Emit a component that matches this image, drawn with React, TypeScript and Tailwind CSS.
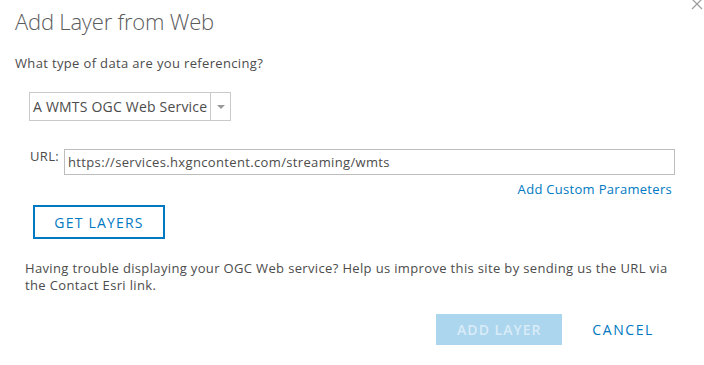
import React from 'react';

export default function App() {
  return (
    <div className="relative w-[704px] h-[365px] overflow-hidden bg-white text-[#4c4c4c] font-['Open_Sans',sans-serif]">
      {/* close icon, partly off the top edge */}
      <button className="absolute right-[1px] top-[-2px] text-[#a0a0a0]">
        <svg width="12" height="12" viewBox="0 0 12 12" fill="none" stroke="currentColor" strokeWidth={1.3}>
          <path d="M1 1l10 10M11 1L1 11" />
        </svg>
      </button>

      <div className="pl-[15px] pt-[7px]">
        <h1 className="text-[22px] leading-[28px] font-light tracking-[-0.2px] text-[#5c5c5c]">Add Layer from Web</h1>

        <p className="mt-[20px] text-[13px] leading-[16px] tracking-[0.35px]">What type of data are you referencing?</p>

        <div className="ml-[14px] mt-[21px] flex w-[202px] h-[29px] border border-[#cacaca]">
          <span className="flex-1 pl-[3px] text-[14px] leading-[27px] tracking-[0.2px] whitespace-nowrap">A WMTS OGC Web Service</span>
          <span className="w-[20px] flex items-center justify-center border-l border-[#cacaca]">
            <svg width="8" height="4" viewBox="0 0 8 4">
              <path d="M0 0h8L4 4z" fill="#9a9a9a" />
            </svg>
          </span>
        </div>

        <div className="mt-[28px] pr-[29px] flex items-start">
          <label className="ml-[15px] w-[34px] text-[13px] leading-[14px] tracking-[0.35px]">URL:</label>
          <div className="flex-1 h-[26px] border border-[#bdbdbd] pl-[3px] text-[13px] leading-[24px] tracking-[0.35px] whitespace-nowrap">
            https://services.hxgncontent.com/streaming/wmts
          </div>
        </div>

        <div className="mt-[6px] pr-[32px] flex justify-end">
          <a className="text-[13px] leading-[16px] tracking-[0.3px] text-[#0079c1]">Add Custom Parameters</a>
        </div>

        <button className="ml-[18px] mt-[8px] w-[132px] h-[34px] border-2 border-[#0079c1] text-[#0079c1] text-[14px] tracking-[1.2px]">
          GET LAYERS
        </button>

        <p className="ml-[10px] mt-[21px] text-[13px] leading-[17px] tracking-[0.35px] whitespace-nowrap">
          Having trouble displaying your OGC Web service? Help us improve this site by sending us the URL via
          <br />
          the Contact Esri link.
        </p>

        <div className="mt-[20px] pr-[50px] flex justify-end items-center gap-[30px]">
          <button className="w-[126px] h-[31px] bg-[#acd5ee] text-[#d9ecf8] text-[14px] font-semibold tracking-[1px]">
            ADD LAYER
          </button>
          <button className="text-[#0079c1] text-[14px] tracking-[1.6px]">CANCEL</button>
        </div>
      </div>
    </div>
  );
}
